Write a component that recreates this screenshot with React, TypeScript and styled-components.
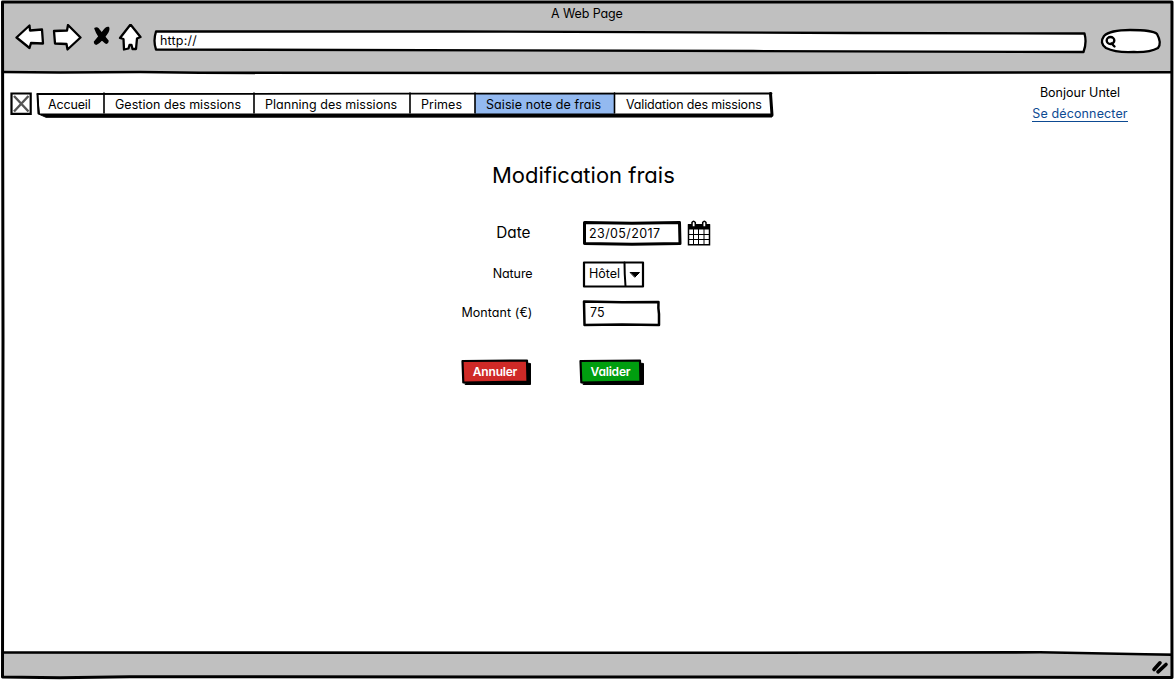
import React from "react";
import styled, { createGlobalStyle, css } from "styled-components";

const Global = createGlobalStyle`
  *, *::before, *::after { box-sizing: border-box; }
  html, body { margin: 0; padding: 0; background: #fff; }
  body { overflow: hidden; }
`;

const Browser = styled.div`
  position: relative;
  display: flex;
  flex-direction: column;
  width: 1174px;
  height: 680px;
  padding: 2px 3px 3px 3px;
  background: #fff;
  color: #000;
  font-family: Inter, "Open Sans", sans-serif;
  font-feature-settings: "cv11", "ss03", "calt" 0;
  font-size: 12.5px;
  line-height: 16px;
`;

const Outline = styled.svg`
  position: absolute;
  left: 0;
  top: 0;
  width: 100%;
  height: 100%;
  overflow: visible;
  pointer-events: none;
  fill: none;
  stroke: #000;
  stroke-linejoin: round;
  stroke-linecap: round;
`;

const Text = styled.span<{ $track?: number; $size?: number; $bold?: boolean }>`
  position: relative;
  white-space: pre;
  letter-spacing: ${(p) => p.$track ?? 0}px;
  ${(p) => p.$size && css`font-size: ${p.$size}px;`}
  ${(p) => p.$bold && css`font-weight: 600;`}
`;

const Chrome = styled.header`
  flex: none;
  height: 71px;
  background: #c0c0c0;
`;

const TitleBar = styled.div`
  height: 22px;
  padding: 4px 0 0 548px;
`;

const Toolbar = styled.div`
  display: flex;
  align-items: flex-start;
  height: 40px;
`;

const NavIcons = styled.svg`
  flex: none;
  width: 150px;
  height: 40px;
  fill: #fff;
  stroke: #000;
  stroke-width: 2.3;
  stroke-linejoin: round;
  stroke-linecap: round;
`;

const Address = styled.div`
  position: relative;
  width: 934px;
  height: 24px;
  margin-top: 5px;
  padding: 4px 0 0 7px;
`;

const Search = styled.div`
  position: relative;
  width: 62px;
  height: 26px;
  margin: 4px 0 0 13px;
`;

const Page = styled.main`
  flex: 1;
  padding: 18px 0 0 7px;
`;

const TopRow = styled.div`
  display: flex;
  height: 32px;
`;

const Logo = styled.svg`
  flex: none;
  width: 22px;
  height: 24px;
`;

const Tabs = styled.nav`
  position: relative;
  display: flex;
  width: 738px;
  height: 27px;
  margin-left: 4px;
  padding: 3px 0 0 3px;
`;

const Tab = styled.a<{ $w: number; $pad: number; $active?: boolean }>`
  width: ${(p) => p.$w}px;
  height: 20px;
  padding-left: ${(p) => p.$pad}px;
  line-height: 21px;
  background: ${(p) => (p.$active ? "#93b9f0" : "#fff")};
`;

const Account = styled.div`
  display: flex;
  flex-direction: column;
  align-items: center;
  width: 100px;
  margin: -6px 0 0 256px;
  gap: 5px;
`;

const Logout = styled.a`
  height: 16px;
  color: #0d4a92;
  border-bottom: 1px solid #0d4a92;
`;

const Form = styled.form`
  width: 300px;
  margin: 38px 0 0 450px;
`;

const Heading = styled.h1`
  margin: 0 0 0 32px;
  font-size: 22px;
  font-weight: 400;
  line-height: 28px;
`;

const Row = styled.div<{ $top: number }>`
  display: flex;
  align-items: center;
  height: 28px;
  margin-top: ${(p) => p.$top}px;
`;

const Label = styled.label<{ $end: number }>`
  display: flex;
  justify-content: flex-end;
  width: ${(p) => p.$end}px;
  margin-right: ${(p) => 122 - p.$end}px;
`;

const Field = styled.div<{ $w: number; $h: number; $pad?: number }>`
  position: relative;
  width: ${(p) => p.$w}px;
  height: ${(p) => p.$h}px;
  padding: 6px 0 0 ${(p) => p.$pad ?? 7}px;
`;

const Calendar = styled.svg`
  width: 24px;
  height: 26px;
  margin-left: 5px;
  fill: none;
  stroke: #000;
`;

const Actions = styled.div`
  display: flex;
  gap: 49px;
  margin-top: 31px;
  padding-left: 1px;
`;

const Button = styled.button<{ $w: number }>`
  position: relative;
  width: ${(p) => p.$w}px;
  height: 28px;
  padding: 0 1px 0 0;
  border: 0;
  background: none;
  color: #fff;
  font: inherit;
  font-feature-settings: inherit;
`;

const Footer = styled.footer`
  flex: none;
  height: 24px;
  background: #c0c0c0;
`;

const tabs = [
  { label: "Accueil", w: 65, pad: 9, track: -0.15 },
  { label: "Gestion des missions", w: 150, pad: 11, track: 0.03 },
  { label: "Planning des missions", w: 156, pad: 11, track: 0.02 },
  { label: "Primes", w: 65, pad: 11, track: 0.05 },
  { label: "Saisie note de frais", w: 139, pad: 11, track: 0.08, active: true },
  { label: "Validation des missions", w: 157, pad: 12, track: -0.16 },
];

interface SketchButtonProps {
  w: number;
  color: string;
  children: string;
}

function SketchButton({ w, color, children }: SketchButtonProps) {
  return (
    <Button type="button" $w={w}>
      <Outline>
        <path d={`M4.500 6L${w - 4} 5L${w + 0.5} 5.500L${w + 0.5} 26.500L4.500 26.500Z`} fill="#000" strokeWidth="1" />
        <path d={`M1.500 3L${w - 3} 2.500L${w - 2.500} 23.500L2.300 24.500Z`} fill={color} strokeWidth="2.200" />
      </Outline>
      <Text $bold $size={12} $track={-0.2}>{children}</Text>
    </Button>
  );
}

export default function App() {
  return (
    <Browser>
      <Global />
      <Chrome>
        <TitleBar><Text $track={-0.1}>A Web Page</Text></TitleBar>
        <Toolbar>
          <NavIcons viewBox="3 24 150 40">
            <path d="M16.500 37.500L29.500 25.500L30 30.500L42 29.500L43 43.500L31 43L29.500 48Z" />
            <path d="M54 31L67 30.500L68 25L80.500 37.500L67.500 49.500L66.500 44L55 43.500Z" />
            <g fill="#000" strokeWidth="1.500">
              <path d="M95 28.500Q97.500 27 99.500 30.500L108 41Q107.500 45 104 41.500Q98 37 95 28.500Z" />
              <path d="M108.500 27.500Q106 27 103.500 31L94.500 42Q95 46 99 42.500Q104 38 106.500 34Q109.500 30 108.500 27.500Z" />
            </g>
            <path d="M130.500 24.500L140.500 37L137 38.500L136 49L132.500 49L131.500 45L129.500 45L128.500 48.500L124 49.500L123.500 39L120 38Z" />
          </NavIcons>
          <Address>
            <Outline><path d="M3 2.500L300 2.500L700 4L931.500 4.500Q934 14 930.500 23L600 22L3 20.500Q0 12 3 2.500Z" fill="#fff" strokeWidth="2.300" /></Outline>
            <Text $track={0.2}>http://</Text>
          </Address>
          <Search>
            <Outline>
              <path d="M4 8Q10 2 30 2Q53 2 57 6Q62 15 58 20Q50 24.500 34 24Q16 25 6 20Q-1 15 4 8Z" fill="#fff" strokeWidth="2.300" />
              <ellipse cx="10.500" cy="12.500" rx="3.800" ry="3.500" strokeWidth="2.400" />
              <path d="M11.500 15.500L14.500 18.500" strokeWidth="2.400" />
            </Outline>
          </Search>
        </Toolbar>
      </Chrome>
      <Page>
        <TopRow>
          <Logo viewBox="0 0 22 24" fill="none">
            <path d="M1.500 2.500H20.700V22.800H1.500Z" stroke="#000" strokeWidth="2.200" />
            <path d="M4 5L18.500 20.500M18.500 5L4 20.500" stroke="#555" strokeWidth="2.400" />
          </Logo>
          <Tabs>
            {tabs.map((t) => (
              <Tab key={t.label} $w={t.w} $pad={t.pad} $active={t.active}><Text $track={t.track}>{t.label}</Text></Tab>
            ))}
            <Outline>
              <path d="M1.500 3L350 2.700L735.500 2.500" strokeWidth="1.800" />
              <path d="M1.500 2.500L2.500 23L10 26.300L736 26L736.500 23L4 23" fill="#000" strokeWidth="1" />
              <path d="M1.500 3L2.500 22.500" strokeWidth="2" />
              <path d="M734.500 2.500L736 24" strokeWidth="3" />
              <path d="M68 2V22M218 2V22M374 2V22M439 2V22M578.500 2V22" strokeWidth="1.600" />
            </Outline>
          </Tabs>
          <Account>
            <Text>Bonjour Untel</Text>
            <Logout><Text $track={0.13}>Se déconnecter</Text></Logout>
          </Account>
        </TopRow>
        <Form>
          <Heading><Text>Modification frais</Text></Heading>
          <Row $top={30}>
            <Label $end={70.5}><Text $size={15.3}>Date</Text></Label>
            <Field $w={100} $h={26}>
              <Outline><path d="M2.500 2.500L50 3.200L97.500 2.500L98 23.500L50 24.300L2.500 23.500Z" fill="#fff" strokeWidth="3" /></Outline>
              <Text $track={0.4}>23/05/2017</Text>
            </Field>
            <Calendar viewBox="0 0 24 26">
              <path d="M1.500 5H22.500V24.800H1.500Z" fill="#fff" strokeWidth="1.500" />
              <path d="M1 4H23V9.500H1Z" fill="#000" stroke="none" />
              <path d="M6.500 9V24M11.500 9V24M17 9V24M2 14.500H22M2 19.500H22" strokeWidth="1" />
              <path d="M5 7V2.500Q6.500 0 8.300 2.500V7ZM15.700 7V2.500Q17.300 0 19 2.500V7Z" fill="#fff" strokeWidth="1.500" />
            </Calendar>
          </Row>
          <Row $top={13}>
            <Label $end={72.5}><Text $track={-0.1}>Nature</Text></Label>
            <Field $w={64} $h={28}>
              <Outline>
                <path d="M2 2.500L61 2.500L61 26.500L2 26.500Z" fill="#fff" strokeWidth="2.200" />
                <path d="M42.500 2.500Q42.500 14 43.500 26" strokeWidth="2" />
                <path d="M48.500 12.500H57.500L53 17Z" fill="#000" strokeWidth="1" />
              </Outline>
              <Text>Hôtel</Text>
            </Field>
          </Row>
          <Row $top={11}>
            <Label $end={72.5}><Text $track={0.08}>Montant (€)</Text></Label>
            <Field $w={80} $h={28} $pad={8}>
              <Outline><path d="M2 2.500L40 3.200L76.500 3Q76 9 77 15L77 26L40 25.500L2.500 26Z" fill="#fff" strokeWidth="2.500" /></Outline>
              <Text>75</Text>
            </Field>
          </Row>
          <Actions>
            <SketchButton w={69} color="#cf2a27">Annuler</SketchButton>
            <SketchButton w={64} color="#009e0f">Valider</SketchButton>
          </Actions>
        </Form>
      </Page>
      <Footer />
      <Outline viewBox="0 0 1174 680">
        <path d="M2.500 2L1172 2L1171.500 340L1172 677.500L700 677L130 676.800L60 677.800L2.500 677L3 340Z" strokeWidth="3" />
        <path d="M3 72L60 72.500L140 72L200 72.800L640 73L1171 72.300" strokeWidth="2.600" />
        <path d="M3 652.500L700 652.800L1040 652.300L1171 654.800" strokeWidth="2.600" />
        <path d="M1154 669.500L1160 662.800M1158 671.800L1166 664.500" strokeWidth="3.600" />
      </Outline>
    </Browser>
  );
}
